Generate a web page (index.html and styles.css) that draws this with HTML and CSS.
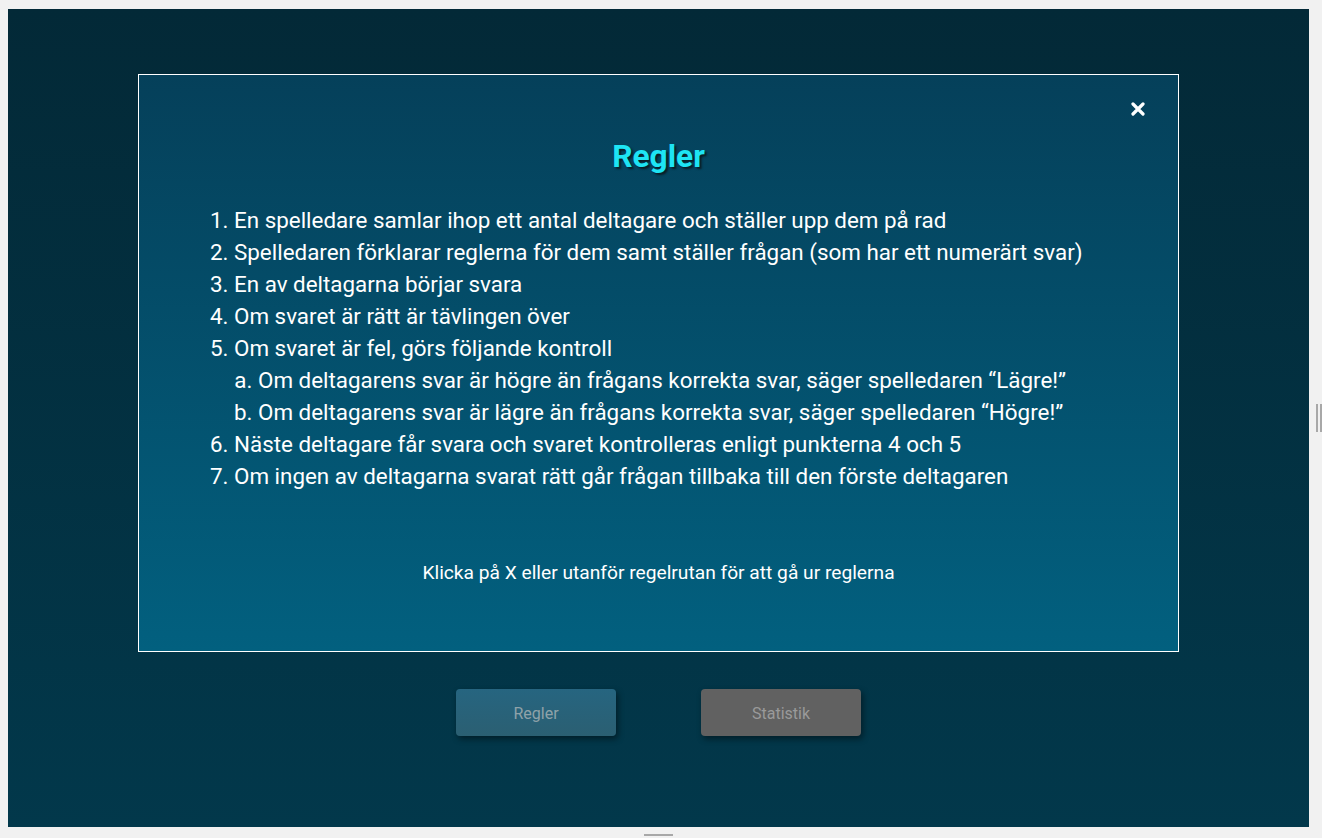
FILE: index.html
```html
<!DOCTYPE html>
<html lang="sv">
<head>
<meta charset="utf-8">
<title>Regler</title>
<link rel="stylesheet" href="styles.css">
</head>
<body>
<div class="frame">
  <div class="app">
    <div class="modal">
      <button class="close" aria-label="Stäng">
        <svg width="14" height="14" viewBox="0 0 14 14"><path d="M2 2 L12 12 M12 2 L2 12" stroke="#fff" stroke-width="3.2" stroke-linecap="round"/></svg>
      </button>
      <h1 class="title">Regler</h1>
      <ol class="rules">
        <li>En spelledare samlar ihop ett antal deltagare och ställer upp dem på rad</li>
        <li>Spelledaren förklarar reglerna för dem samt ställer frågan (som har ett numerärt svar)</li>
        <li>En av deltagarna börjar svara</li>
        <li>Om svaret är rätt är tävlingen över</li>
        <li>Om svaret är fel, görs följande kontroll
          <ol class="sub">
            <li>Om deltagarens svar är högre än frågans korrekta svar, säger spelledaren “Lägre!”</li>
            <li>Om deltagarens svar är lägre än frågans korrekta svar, säger spelledaren “Högre!”</li>
          </ol>
        </li>
        <li>Näste deltagare får svara och svaret kontrolleras enligt punkterna 4 och 5</li>
        <li>Om ingen av deltagarna svarat rätt går frågan tillbaka till den förste deltagaren</li>
      </ol>
      <p class="hint">Klicka på X eller utanför regelrutan för att gå ur reglerna</p>
    </div>
    <div class="actions">
      <button class="btn btn-rules">Regler</button>
      <button class="btn btn-stats">Statistik</button>
    </div>
  </div>
  <div class="grip-v"></div>
  <div class="grip-h"></div>
</div>
</body>
</html>
```

FILE: styles.css
```css
html, body {
  margin: 0;
  padding: 0;
  background: #f1f1f1;
  font-family: Roboto, "Liberation Sans", Arial, sans-serif;
}
.frame {
  position: relative;
  width: 1322px;
  height: 838px;
  padding: 9px 13px 11px 8px;
  box-sizing: border-box;
}
.app {
  height: 818px;
  background: linear-gradient(to bottom, #032937 0%, #02384b 100%);
  display: flex;
  flex-direction: column;
  align-items: center;
  padding-top: 65px;
  box-sizing: border-box;
}
.modal {
  position: relative;
  width: 1041px;
  height: 578px;
  box-sizing: border-box;
  border: 1px solid #ffffff;
  background: linear-gradient(to bottom, #05405a 0%, #02607f 100%);
  color: #ffffff;
  padding-top: 62px;
}
.close {
  position: absolute;
  top: 27px;
  right: 33px;
  width: 14px;
  height: 14px;
  padding: 0;
  border: 0;
  background: none;
  display: flex;
}
.title {
  margin: 0;
  text-align: center;
  font-size: 31.7px;
  font-weight: 700;
  color: #1ee4f4;
  line-height: 40px;
  text-shadow: 2px 2px 2px #0b1d26;
}
.rules {
  margin: 27px 0 0 0;
  padding-left: 95px;
  font-size: 22.4px;
  line-height: 32px;
}
.sub {
  list-style-type: lower-alpha;
  margin: 0;
  padding-left: 24px;
}
.hint {
  margin: 69px 0 0 0;
  text-align: center;
  font-size: 19.2px;
  line-height: 24px;
}
.actions {
  display: flex;
  gap: 85px;
  margin-top: 37px;
}
.btn {
  width: 160px;
  height: 47px;
  border: 0;
  border-radius: 4px;
  font-family: Roboto, "Liberation Sans", Arial, sans-serif;
  font-size: 16px;
  padding-top: 2px;
  color: #8fa2a9;
  box-shadow: 2px 3px 6px rgba(0, 0, 0, 0.45);
}
.btn-rules {
  background: linear-gradient(to bottom, #266580, #2b5f72);
}
.btn-stats {
  background: #616161;
  color: #9a9a9a;
}
.grip-v {
  position: absolute;
  left: 1316px;
  top: 404px;
  width: 6px;
  height: 28px;
  border-left: 2px solid #a8a8a8;
  border-right: 2px solid #a8a8a8;
  box-sizing: border-box;
}
.grip-h {
  position: absolute;
  left: 644px;
  top: 834px;
  width: 29px;
  height: 2px;
  background: #a8a8a8;
}
```
